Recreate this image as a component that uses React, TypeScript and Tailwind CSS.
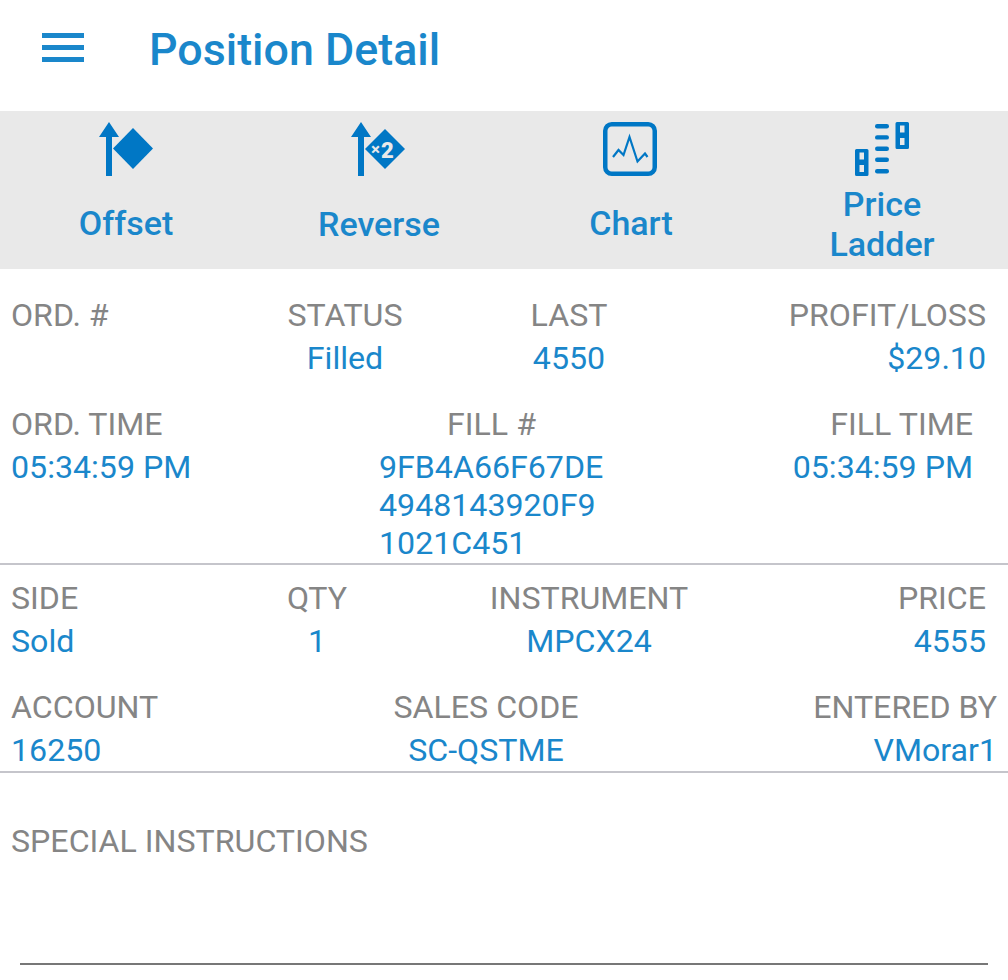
import React from "react";

const L = ({ children, className = "" }: { children: React.ReactNode; className?: string }) => (
  <div className={`h-[43px] leading-[43px] text-[#858585] whitespace-nowrap ${className}`}>{children}</div>
);
const V = ({ children, className = "" }: { children: React.ReactNode; className?: string }) => (
  <div className={`leading-[38px] text-[#1a87cb] whitespace-nowrap ${className}`}>{children}</div>
);

const OffsetIcon = () => (
  <svg width="54" height="54" viewBox="0 0 54 54" fill="#0077c5">
    <path d="M7 54V15H0L10 0L20 15H13V54Z" />
    <path d="M34 6L54 26.5L34 47L14 26.5Z" />
  </svg>
);
const ReverseIcon = () => (
  <svg width="54" height="54" viewBox="0 0 54 54" fill="#0077c5">
    <path d="M7 54V15H0L10 0L20 15H13V54Z" />
    <path d="M34 7L54 27L34 47L14 27Z" />
    <text x="20" y="33" fontSize="17" fontWeight="700" fill="#e9e9e9" fontFamily="Roboto">×</text>
    <text x="30" y="36" fontSize="22" fontWeight="900" fill="#e9e9e9" fontFamily="Roboto">2</text>
  </svg>
);
const ChartIcon = () => (
  <svg width="54" height="54" viewBox="0 0 54 54" fill="none" stroke="#0077c5">
    <rect x="2.25" y="2.25" width="49.5" height="49.5" rx="6.5" strokeWidth="4.5" />
    <path d="M10 35L15.5 28L20.5 33L26.5 15L34.5 39.5L42 31.5L44.5 35" strokeWidth="2.2" />
  </svg>
);
const LadderIcon = () => (
  <svg width="54" height="54" viewBox="0 0 54 54" fill="#0077c5">
    <path fillRule="evenodd" d="M42 0H52.5Q54 0 54 1.5V25.5Q54 27 52.5 27H42Q40.5 27 40.5 25.5V1.5Q40.5 0 42 0ZM45 3.5V10.5H49.5V3.5ZM45 16V23H49.5V16Z" />
    <path fillRule="evenodd" d="M1.5 27H12Q13.5 27 13.5 28.5V52.5Q13.5 54 12 54H1.5Q0 54 0 52.5V28.5Q0 27 1.5 27ZM4.5 30.5V37.5H9V30.5ZM4.5 43V50H9V43Z" />
    <rect x="20" y="2" width="14" height="4.4" rx="2.2" />
    <rect x="20" y="13.2" width="14" height="4.4" rx="2.2" />
    <rect x="20" y="24.6" width="14" height="4.4" rx="2.2" />
    <rect x="20" y="35.6" width="14" height="4.4" rx="2.2" />
    <rect x="20" y="47" width="14" height="4.4" rx="2.2" />
  </svg>
);

const Tool = ({ icon, children, className = "" }: { icon: React.ReactNode; children: React.ReactNode; className?: string }) => (
  <div className="flex flex-col items-center pt-[11px]">
    {icon}
    <div className={`h-[80px] mt-[7px] flex items-center justify-center text-center text-[34px] leading-[40px] font-medium text-[#1a87cb] ${className}`}>
      {children}
    </div>
  </div>
);

export default function App() {
  return (
    <div className="w-[1008px] h-[980px] bg-white overflow-hidden text-[32.15px]" style={{ fontFamily: "Roboto, sans-serif" }}>
      <header className="h-[111px] flex items-center">
        <div className="ml-[42px] w-[42px] flex flex-col gap-[7px] mb-[16px]">
          <div className="h-[5px] bg-[#1a87cb]" />
          <div className="h-[5px] bg-[#1a87cb]" />
          <div className="h-[5px] bg-[#1a87cb]" />
        </div>
        <h1 className="ml-[65px] mb-[11px] text-[44.8px] font-medium text-[#1a87cb] leading-none whitespace-nowrap">Position Detail</h1>
      </header>

      <nav className="h-[158px] bg-[#e9e9e9] grid grid-cols-4">
        <Tool icon={<OffsetIcon />}>Offset</Tool>
        <Tool icon={<ReverseIcon />} className="pt-[1px] pl-[2px]">Reverse</Tool>
        <Tool icon={<ChartIcon />} className="pl-[2px]">Chart</Tool>
        <Tool icon={<LadderIcon />} className="pt-[1px]">Price<br />Ladder</Tool>
      </nav>

      <section className="h-[296px] pt-[25px] border-b-2 border-[#c5c5cb]">
        <div className="grid grid-cols-[239px_190px_258px_288px] pl-[11px]">
          <div><L>ORD. #</L></div>
          <div className="text-center"><L>STATUS</L><V className="leading-[43px]">Filled</V></div>
          <div className="text-center"><L>LAST</L><V className="leading-[43px]">4550</V></div>
          <div className="text-right"><L>PROFIT/LOSS</L><V className="leading-[43px]">$29.10</V></div>
        </div>
        <div className="grid grid-cols-[368px_225px_369px] pl-[11px] mt-[23px]">
          <div><L>ORD. TIME</L><V className="leading-[43px]">05:34:59 PM</V></div>
          <div>
            <L className="text-center">FILL #</L>
            <V className="leading-[38px] pt-[2px]">9FB4A66F67DE<br />4948143920F9<br />1021C451</V>
          </div>
          <div className="text-right"><L>FILL TIME</L><V className="leading-[43px]">05:34:59 PM</V></div>
        </div>
      </section>

      <section className="h-[208px] pt-[12px] border-b-2 border-[#c5c5cb]">
        <div className="grid grid-cols-[229px_154px_390px_202px] pl-[11px]">
          <div><L>SIDE</L><V className="leading-[43px]">Sold</V></div>
          <div className="text-center"><L>QTY</L><V className="leading-[43px]">1</V></div>
          <div className="text-center"><L>INSTRUMENT</L><V className="leading-[43px]">MPCX24</V></div>
          <div className="text-right"><L>PRICE</L><V className="leading-[43px]">4555</V></div>
        </div>
        <div className="grid grid-cols-[289px_372px_325px] pl-[11px] mt-[23px]">
          <div><L>ACCOUNT</L><V className="leading-[43px]">16250</V></div>
          <div className="text-center"><L>SALES CODE</L><V className="leading-[43px]">SC-QSTME</V></div>
          <div className="text-right"><L>ENTERED BY</L><V className="leading-[43px]">VMorar1</V></div>
        </div>
      </section>

      <section className="pt-[47px] pl-[11px]">
        <L>SPECIAL INSTRUCTIONS</L>
      </section>
      <div className="mt-[100px] ml-5 w-[968px] h-[2px] bg-[#777777]" />
    </div>
  );
}
